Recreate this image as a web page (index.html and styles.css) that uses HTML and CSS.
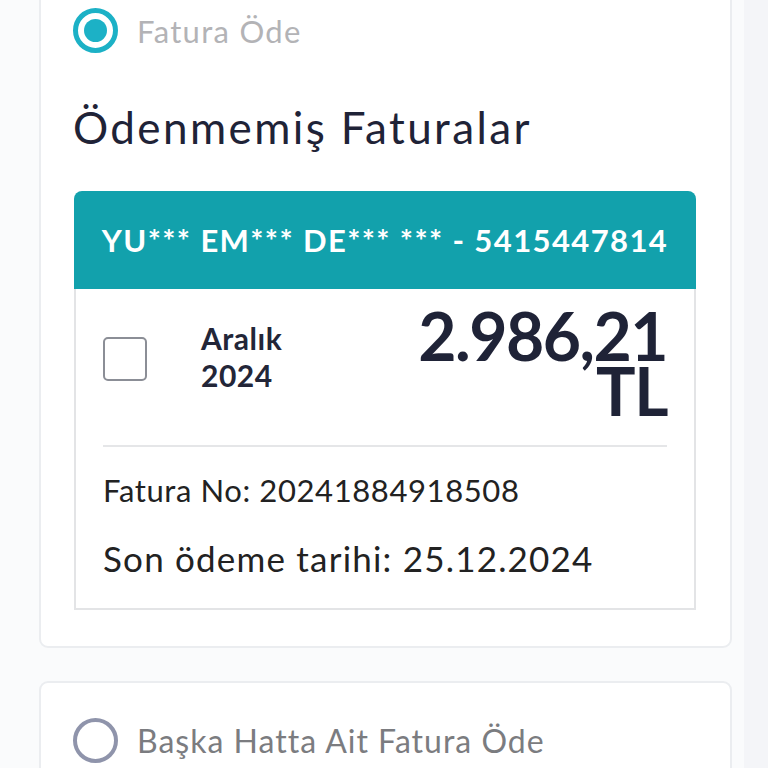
FILE: index.html
```html
<!DOCTYPE html>
<html lang="tr">
<head>
    <meta charset="UTF-8">
    <meta name="viewport" content="width=device-width, initial-scale=1.0">
    <title>Fatura Öde</title>
    <link rel="stylesheet" href="styles.css">
</head>
<body>
    <div class="page">
        <!-- Current line -->
        <div class="card card-first">
            <label class="option">
                <span class="radio radio-on"><span class="radio-dot"></span></span>
                <span class="option-text">Fatura Öde</span>
            </label>

            <h2 class="title">Ödenmemiş Faturalar</h2>

            <div class="invoice">
                <div class="invoice-head">YU*** EM*** DE*** *** - 5415447814</div>
                <div class="invoice-body">
                    <div class="invoice-row">
                        <span class="check"></span>
                        <span class="period">Aralık<br>2024</span>
                        <span class="amount">2.986,21<br>TL</span>
                    </div>
                    <div class="invoice-info">
                        <p class="invoice-no">Fatura No: 20241884918508</p>
                        <p class="due">Son ödeme tarihi: 25.12.2024</p>
                    </div>
                </div>
            </div>
        </div>

        <!-- Other line -->
        <div class="card card-second">
            <label class="option">
                <span class="radio"></span>
                <span class="option-text option-text-dark">Başka Hatta Ait Fatura Öde</span>
            </label>
        </div>
    </div>
</body>
</html>
```

FILE: styles.css
```css
/* General styles */
body {
    font-family: "Lato", "Liberation Sans", sans-serif;
    margin: 0;
    padding: 0;
    background-color: #f4f5f8;
    overflow: hidden;
}

.page {
    width: 744px;
    min-height: 768px;
    background: #fafbfc;
    padding: 0 12px 0 39px;
    box-sizing: border-box;
}

/* Cards */
.card {
    background: #fff;
    border: 2px solid #ebedf0;
    border-radius: 9px;
    padding: 0 34px 36px 32px;
}

.card-first {
    margin-top: -22px;
    padding-top: 28px;
}

.card-second {
    margin-top: 33px;
    padding-top: 35px;
}

/* Radio options */
.option {
    display: flex;
    align-items: center;
    gap: 19px;
    height: 45px;
}

.radio {
    width: 45px;
    height: 45px;
    flex: none;
    box-sizing: border-box;
    border: 4px solid #8f94ab;
    border-radius: 50%;
    display: flex;
    align-items: center;
    justify-content: center;
}

.radio-on {
    border: 5px solid #1cb1c6;
}

.radio-dot {
    width: 23px;
    height: 23px;
    border-radius: 50%;
    background: #1cb1c6;
}

.option-text {
    font-size: 31px;
    letter-spacing: 1.3px;
    color: #b3b3b6;
}

.option-text-dark {
    color: #7b7c80;
    font-size: 32px;
    letter-spacing: 1px;
}

.title {
    margin: 48px 0 38px 0;
    font-size: 44px;
    line-height: 52px;
    letter-spacing: 2.4px;
    font-weight: 400;
    color: #1f2337;
}

/* Invoice box */
.invoice {
    margin-left: 1px;
}

.invoice-head {
    background: #12a1ac;
    color: #fff;
    font-size: 31px;
    font-weight: 700;
    letter-spacing: 1.4px;
    text-align: center;
    height: 98px;
    line-height: 98px;
    border-radius: 8px 8px 0 0;
}

.invoice-body {
    border: 2px solid #e3e4e6;
    border-top: none;
    padding: 0 27px;
}

.invoice-row {
    display: flex;
    align-items: flex-start;
    padding: 19px 0 27px;
    border-bottom: 2px solid #e5e6e8;
}

.check {
    width: 44px;
    height: 44px;
    flex: none;
    box-sizing: border-box;
    border: 2px solid #8b8e96;
    border-radius: 5px;
    margin: 29px 54px 0 0;
}

.period {
    font-size: 30px;
    font-weight: 700;
    letter-spacing: 0.5px;
    color: #232638;
    line-height: 37px;
    margin-top: 12px;
}

.amount {
    margin-left: auto;
    text-align: right;
    font-size: 66px;
    font-weight: 700;
    letter-spacing: -1.5px;
    color: #1f2337;
    line-height: 55px;
}

.invoice-info {
    padding: 23px 0 27px;
    color: #222;
}

.invoice-info p {
    margin: 0;
}

.invoice-no {
    font-size: 31px;
    line-height: 40px;
    letter-spacing: 0.6px;
}

.due {
    font-size: 35px;
    line-height: 46px;
    letter-spacing: 1.2px;
    margin-top: 25px !important;
}
```
